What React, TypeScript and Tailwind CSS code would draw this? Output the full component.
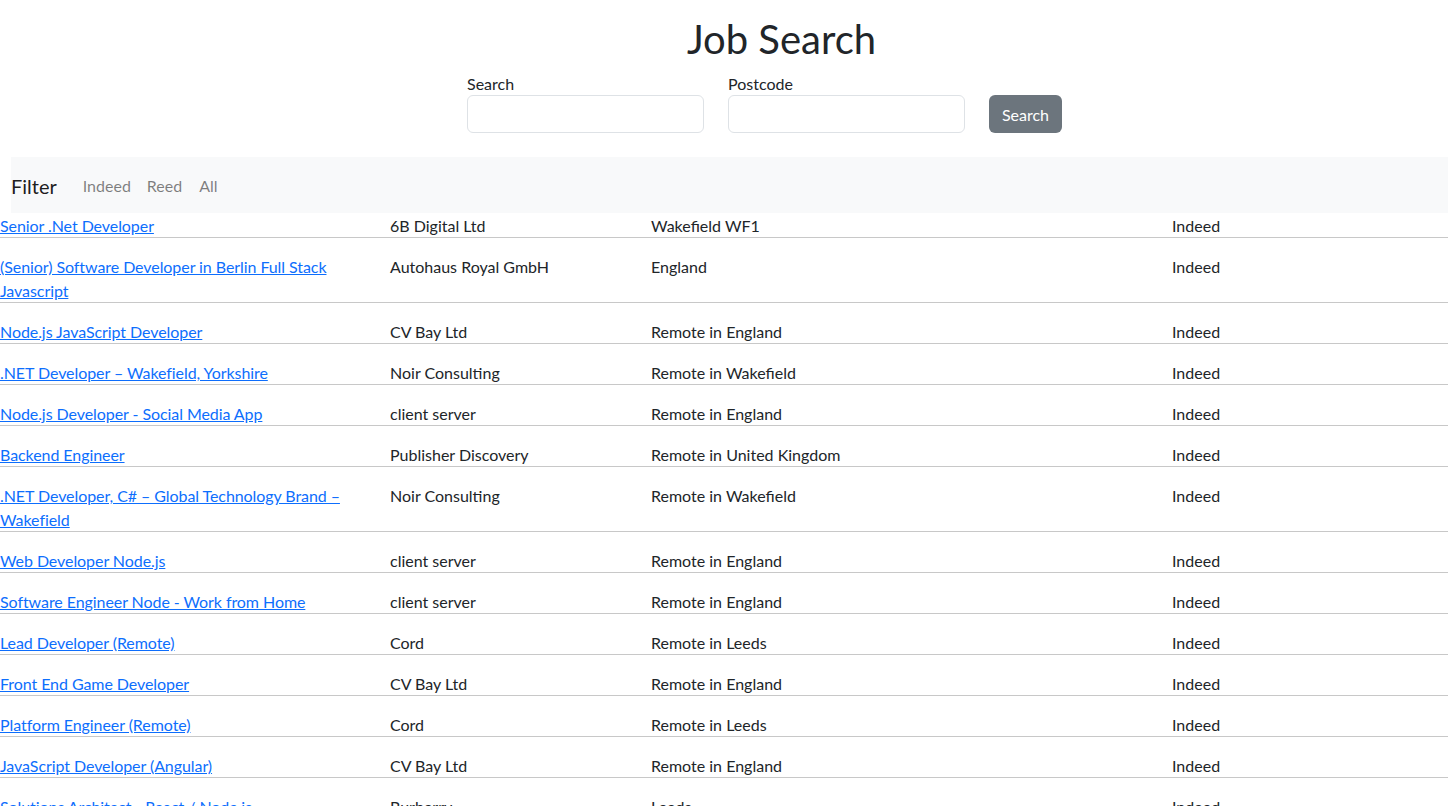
import React from "react";

type Job = { title: string; company: string; location: string; source: string };

const jobs: Job[] = [
  { title: "Senior .Net Developer", company: "6B Digital Ltd", location: "Wakefield WF1", source: "Indeed" },
  { title: "(Senior) Software Developer in Berlin Full Stack Javascript", company: "Autohaus Royal GmbH", location: "England", source: "Indeed" },
  { title: "Node.js JavaScript Developer", company: "CV Bay Ltd", location: "Remote in England", source: "Indeed" },
  { title: ".NET Developer – Wakefield, Yorkshire", company: "Noir Consulting", location: "Remote in Wakefield", source: "Indeed" },
  { title: "Node.js Developer - Social Media App", company: "client server", location: "Remote in England", source: "Indeed" },
  { title: "Backend Engineer", company: "Publisher Discovery", location: "Remote in United Kingdom", source: "Indeed" },
  { title: ".NET Developer, C# – Global Technology Brand – Wakefield", company: "Noir Consulting", location: "Remote in Wakefield", source: "Indeed" },
  { title: "Web Developer Node.js", company: "client server", location: "Remote in England", source: "Indeed" },
  { title: "Software Engineer Node - Work from Home", company: "client server", location: "Remote in England", source: "Indeed" },
  { title: "Lead Developer (Remote)", company: "Cord", location: "Remote in Leeds", source: "Indeed" },
  { title: "Front End Game Developer", company: "CV Bay Ltd", location: "Remote in England", source: "Indeed" },
  { title: "Platform Engineer (Remote)", company: "Cord", location: "Remote in Leeds", source: "Indeed" },
  { title: "JavaScript Developer (Angular)", company: "CV Bay Ltd", location: "Remote in England", source: "Indeed" },
  { title: "Solutions Architect - React / Node.js", company: "Burberry", location: "Leeds", source: "Indeed" },
  { title: "Full Stack Developer", company: "CV Bay Ltd", location: "Remote in England", source: "Indeed" },
];

export default function App() {
  return (
    <div
      className="min-h-screen bg-white text-[#212529] text-base leading-6"
      style={{ fontFamily: "Lato, 'Noto Sans', sans-serif" }}
    >
      <header className="pt-[15px]">
        <h1 className="text-center text-[40px] leading-[48px] font-normal pl-[115px]">Job Search</h1>
        <form className="flex justify-center items-end gap-6 pl-[81px] mt-[9px]" onSubmit={(e) => e.preventDefault()}>
          <div className="flex flex-col w-[237px]">
            <label className="leading-6 mb-[-1px]">Search</label>
            <input className="h-[38px] border border-[#dee2e6] rounded-md px-3 outline-none" />
          </div>
          <div className="flex flex-col w-[237px]">
            <label className="leading-6 mb-[-1px]">Postcode</label>
            <input className="h-[38px] border border-[#dee2e6] rounded-md px-3 outline-none" />
          </div>
          <button className="h-[38px] w-[73px] pt-[2px] rounded-md bg-[#6c757d] text-white">Search</button>
        </form>
      </header>

      <nav className="mt-6 ml-[11px] h-14 pt-px bg-[#f8f9fa] flex items-center">
        <span className="text-xl text-[#000000e6] mr-[26px]">Filter</span>
        <a className="text-[#00000080] mr-4 cursor-pointer">Indeed</a>
        <a className="text-[#00000080] mr-[17px] cursor-pointer">Reed</a>
        <a className="text-[#00000080] cursor-pointer">All</a>
      </nav>

      <div>
        {jobs.map((j, i) => (
          <div
            key={i}
            className={`grid grid-cols-[390px_261px_521px_1fr] border-b border-[#c8c8c8] ${i === 0 ? "pt-px" : "pt-[17px]"}`}
          >
            <div className="pr-[10px] mb-[-1px]">
              <a className="text-[#0d6efd] underline cursor-pointer tracking-[-0.07px]">{j.title}</a>
            </div>
            <div className="mb-[-1px]">{j.company}</div>
            <div className="mb-[-1px]">{j.location}</div>
            <div className="mb-[-1px]">{j.source}</div>
          </div>
        ))}
      </div>
    </div>
  );
}
